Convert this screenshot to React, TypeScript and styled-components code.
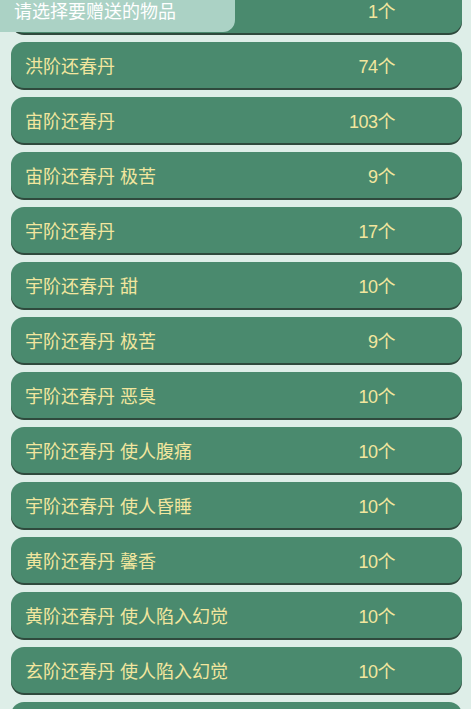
import React from "react";
import styled, { createGlobalStyle } from "styled-components";

const items = [
  { name: "", count: 1 },
  { name: "洪阶还春丹", count: 74 },
  { name: "宙阶还春丹", count: 103 },
  { name: "宙阶还春丹 极苦", count: 9 },
  { name: "宇阶还春丹", count: 17 },
  { name: "宇阶还春丹 甜", count: 10 },
  { name: "宇阶还春丹 极苦", count: 9 },
  { name: "宇阶还春丹 恶臭", count: 10 },
  { name: "宇阶还春丹 使人腹痛", count: 10 },
  { name: "宇阶还春丹 使人昏睡", count: 10 },
  { name: "黄阶还春丹 馨香", count: 10 },
  { name: "黄阶还春丹 使人陷入幻觉", count: 10 },
  { name: "玄阶还春丹 使人陷入幻觉", count: 10 },
  { name: "", count: 0 },
];

const GlobalStyle = createGlobalStyle`
  html, body {
    margin: 0;
    padding: 0;
    background: #deeee8;
    overflow: hidden;
  }
  body {
    font-family: "Liberation Sans", "Noto Sans CJK SC", sans-serif;
  }
`;

const App = () => {
  return (
    <Page>
      <GlobalStyle />
      <Header>请选择要赠送的物品</Header>
      <ItemList>
        {items.map((item, i) => (
          <ItemRow key={item.name + i}>
            <ItemName>{item.name}</ItemName>
            {item.count > 0 && <ItemCount>{item.count}个</ItemCount>}
          </ItemRow>
        ))}
      </ItemList>
    </Page>
  );
};

export default App;

const Page = styled.div`
  position: relative;
  width: 471px;
  height: 709px;
  overflow: hidden;
  background: #deeee8;
`;

const Header = styled.div`
  position: absolute;
  top: 0;
  left: 0;
  z-index: 2;
  width: 235px;
  height: 32px;
  box-sizing: border-box;
  padding: 0 0 9px 14px;
  display: flex;
  align-items: center;
  background: #abd2c5;
  border-bottom-right-radius: 12px;
  color: #ffffff;
  font-size: 18px;
  line-height: 1;
`;

const ItemList = styled.div`
  display: flex;
  flex-direction: column;
  gap: 9px;
  margin-top: -13px;
  padding: 0 9px 0 11px;
`;

const ItemRow = styled.div`
  display: flex;
  align-items: center;
  height: 46px;
  box-sizing: border-box;
  padding: 0 67px 1px 14px;
  background: #4a8a6e;
  border-radius: 13px;
  box-shadow: 0 2px 0 #2f4a3d;
`;

const ItemName = styled.span`
  flex: 1;
  color: #f2e69e;
  font-size: 18px;
  white-space: nowrap;
`;

const ItemCount = styled.span`
  color: #f2e69e;
  font-size: 18px;
  text-align: right;
  letter-spacing: -0.5px;
`;
